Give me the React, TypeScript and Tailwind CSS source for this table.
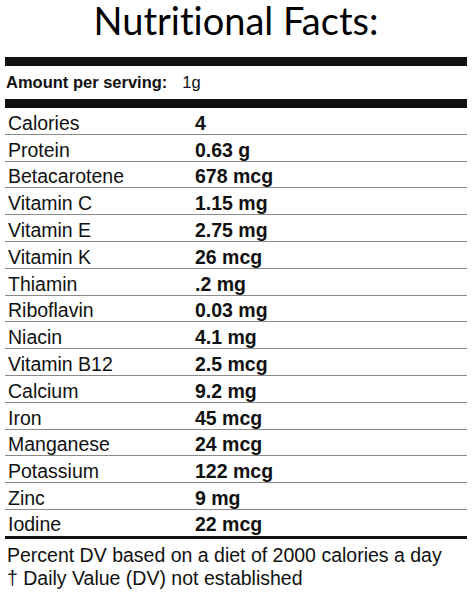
import React from "react";

const rows: [string, string][] = [
  ["Calories", "4"],
  ["Protein", "0.63 g"],
  ["Betacarotene", "678 mcg"],
  ["Vitamin C", "1.15 mg"],
  ["Vitamin E", "2.75 mg"],
  ["Vitamin K", "26 mcg"],
  ["Thiamin", ".2 mg"],
  ["Riboflavin", "0.03 mg"],
  ["Niacin", "4.1 mg"],
  ["Vitamin B12", "2.5 mcg"],
  ["Calcium", "9.2 mg"],
  ["Iron", "45 mcg"],
  ["Manganese", "24 mcg"],
  ["Potassium", "122 mcg"],
  ["Zinc", "9 mg"],
  ["Iodine", "22 mcg"],
];

const App = () => {
  return (
    <div className="w-[472px] h-[594px] bg-white overflow-hidden text-[#111]">
      <h1
        className="text-center text-[38px] leading-[40px] font-normal text-black [font-variant-ligatures:none]"
        style={{ fontFamily: "Lato, 'Open Sans', sans-serif" }}
      >
        Nutritional Facts:
      </h1>

      <div
        className="mx-[5px] mt-[17px]"
        style={{ fontFamily: "'Liberation Sans', Arial, sans-serif" }}
      >
        <div className="h-[9px] bg-[#111]" />
        <div className="h-[33px] flex items-center pl-[1px] text-[16.5px]">
          <span className="font-bold">Amount per serving:</span>
          <span className="ml-[15px]">1g</span>
        </div>
        <div className="h-[9px] bg-[#111]" />

        <div>
          {rows.map(([label, value], i) => (
            <div
              key={label}
              className={
                i === rows.length - 1
                  ? "h-[29px] flex items-end pb-[2px] border-b-[3px] border-[#111] text-[19.5px] leading-[20px]"
                  : "h-[26.8px] flex items-end pb-[1px] border-b border-[#8a8a8a] text-[19.5px] leading-[20px]"
              }
            >
              <span className="w-[190px] pl-[3px]">{label}</span>
              <span className="font-bold">{value}</span>
            </div>
          ))}
        </div>

        <div className="pt-[5px] text-[19.5px] leading-[23px] pl-[2px]">
          <p>Percent DV based on a diet of 2000 calories a day</p>
          <p>† Daily Value (DV) not established</p>
        </div>
      </div>
    </div>
  );
};

export default App;
